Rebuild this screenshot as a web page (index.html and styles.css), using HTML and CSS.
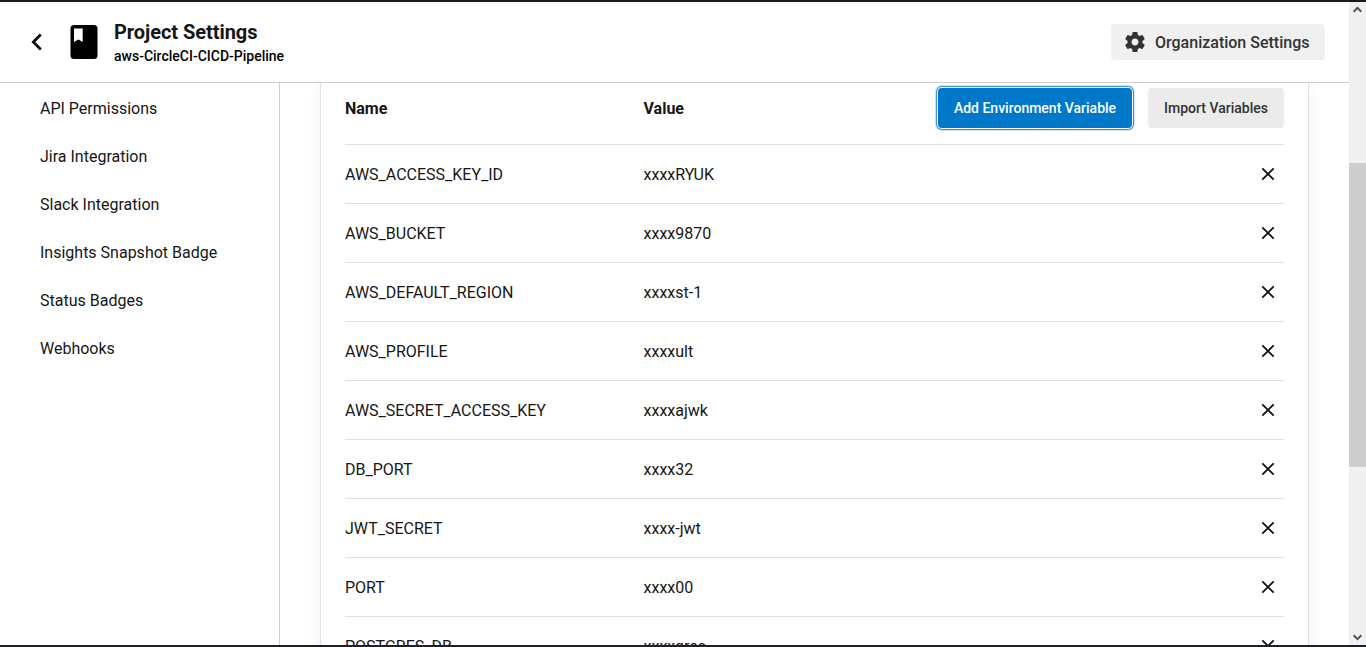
FILE: index.html
```html
<!DOCTYPE html>
<html lang="en">
<head>
<meta charset="utf-8">
<title>Project Settings</title>
<link rel="stylesheet" href="styles.css">
</head>
<body>
<svg width="0" height="0" class="sprite" aria-hidden="true">
  <symbol id="close" viewBox="0 0 14 14"><path d="M1.300 1.300 12.700 12.700M12.700 1.300 1.300 12.700" fill="none" stroke="#111" stroke-width="1.800"/></symbol>
</svg>
<div class="window">
  <div class="app">
    <header class="header">
      <svg class="back" width="12" height="18" viewBox="0 0 12 18"><path d="M10.800 1.500 3.300 9l7.500 7.500" fill="none" stroke="#0a0a0a" stroke-width="2.700"/></svg>
      <svg class="book" width="28" height="34" viewBox="0 0 28 34"><path fill="#000" fill-rule="evenodd" d="M3.500 0h20.500a3.500 3.500 0 0 1 3.500 3.500v27a3.500 3.500 0 0 1-3.500 3.500H4a3.500 3.500 0 0 1-3.500-3.500V3.500A3.500 3.500 0 0 1 4 0zM4 3.500V17l4.300-2.600 4.400 2.600V3.500z"/></svg>
      <div class="titles">
        <h1 class="title">Project Settings</h1>
        <div class="project">aws-CircleCI-CICD-Pipeline</div>
      </div>
      <button class="org">
        <svg width="24" height="24" viewBox="0 0 24 24"><path fill="#333" d="M19.430 12.980c.040-.320.070-.640.070-.980s-.030-.660-.070-.980l2.110-1.650c.190-.150.240-.420.120-.640l-2-3.460c-.120-.220-.390-.300-.610-.220l-2.490 1c-.520-.400-1.080-.730-1.690-.980l-.380-2.650C14.460 2.180 14.250 2 14 2h-4c-.250 0-.460.180-.490.420l-.380 2.650c-.610.250-1.170.590-1.690.980l-2.490-1c-.230-.090-.490 0-.610.220l-2 3.460c-.130.220-.070.490.120.640l2.110 1.650c-.040.320-.070.650-.070.980s.030.660.070.980l-2.110 1.650c-.190.150-.240.420-.120.640l2 3.460c.120.220.390.300.610.220l2.490-1c.520.400 1.080.730 1.690.980l.380 2.650c.030.240.240.420.490.420h4c.250 0 .460-.180.490-.420l.380-2.650c.610-.250 1.170-.590 1.690-.980l2.490 1c.230.090.490 0 .610-.220l2-3.460c.120-.220.070-.490-.120-.640l-2.110-1.650zM12 15.500c-1.930 0-3.500-1.570-3.500-3.500s1.570-3.500 3.500-3.500 3.500 1.570 3.500 3.500-1.570 3.500-3.500 3.500z"/></svg>
        <span>Organization Settings</span>
      </button>
    </header>
    <div class="body">
      <nav class="sidebar">
        <a>API Permissions</a>
        <a>Jira Integration</a>
        <a>Slack Integration</a>
        <a>Insights Snapshot Badge</a>
        <a>Status Badges</a>
        <a>Webhooks</a>
      </nav>
      <main class="main">
        <section class="card">
          <div class="row head">
            <b>Name</b><b>Value</b>
            <div class="actions"><button class="btn primary">Add Environment Variable</button><button class="btn">Import Variables</button></div>
          </div>
          <div class="row"><span>AWS_ACCESS_KEY_ID</span><span>xxxxRYUK</span><svg class="x"><use href="#close"/></svg></div>
          <div class="row"><span>AWS_BUCKET</span><span>xxxx9870</span><svg class="x"><use href="#close"/></svg></div>
          <div class="row"><span>AWS_DEFAULT_REGION</span><span>xxxxst-1</span><svg class="x"><use href="#close"/></svg></div>
          <div class="row"><span>AWS_PROFILE</span><span>xxxxult</span><svg class="x"><use href="#close"/></svg></div>
          <div class="row"><span>AWS_SECRET_ACCESS_KEY</span><span>xxxxajwk</span><svg class="x"><use href="#close"/></svg></div>
          <div class="row"><span>DB_PORT</span><span>xxxx32</span><svg class="x"><use href="#close"/></svg></div>
          <div class="row"><span>JWT_SECRET</span><span>xxxx-jwt</span><svg class="x"><use href="#close"/></svg></div>
          <div class="row"><span>PORT</span><span>xxxx00</span><svg class="x"><use href="#close"/></svg></div>
          <div class="row"><span>POSTGRES_DB</span><span>xxxxgres</span><svg class="x"><use href="#close"/></svg></div>
        </section>
      </main>
    </div>
  </div>
  <div class="scrollbar">
    <svg width="17" height="17" viewBox="0 0 17 17"><path d="m4.700 9.700 3.800-3.800 3.800 3.800" fill="none" stroke="#505050" stroke-width="2"/></svg>
    <div class="thumb"></div>
    <svg class="down" width="17" height="17" viewBox="0 0 17 17"><path d="m4.700 7.300 3.800 3.800 3.800-3.800" fill="none" stroke="#505050" stroke-width="2"/></svg>
  </div>
</div>
</body>
</html>
```
FILE: styles.css
```css
* { box-sizing: border-box; }
body { margin: 0; font: 16px/24px Roboto, "Liberation Sans", sans-serif; color: #161616; background: #fff; overflow: hidden; }
.sprite { display: none; }
.window { height: 647px; display: flex; border-top: 2px solid #1b1a1d; border-bottom: 2px solid #231b27; overflow: hidden; }
.app { flex: 1; display: flex; flex-direction: column; min-width: 0; }
.header { flex: none; height: 81px; display: flex; align-items: center; border-bottom: 1px solid #ccc; padding: 0 24px 0 30px; }
.back { margin-right: 28px; }
.book { margin-right: 16px; }
.titles { flex: 1; padding-top: 4px; }
.title { margin: 0; font-size: 20px; line-height: 24px; font-weight: 700; letter-spacing: -0.05px; }
.project { font-size: 14px; line-height: 24px; font-weight: 500; color: #000; }
button { font-family: inherit; border: 0; border-radius: 4px; color: #333; font-weight: 500; margin: 0; }
.org { display: flex; align-items: center; width: 214px; height: 36px; padding: 0 0 0 12px; gap: 8px; font-size: 16px; background: #f0f0f0; white-space: nowrap; }
.body { flex: 1; display: flex; min-height: 0; }
.sidebar { width: 280px; border-right: 1px solid #ccc; padding: 2px 0 0 40px; display: flex; flex-direction: column; }
.sidebar a { height: 48px; line-height: 48px; }
.main { flex: 1; padding: 0 40px; overflow: hidden; }
.card { width: 989px; height: 640px; border: 1px solid #e2e2e2; border-top: 0; padding: 0 24px; box-shadow: 0 0 14px rgba(0, 0, 0, .06); }
.row { display: grid; grid-template-columns: 298.500px 1fr auto; align-items: center; height: 59px; border-bottom: 1px solid #e0e0e0; }
.row > span, .row > b { padding-top: 2px; }
.head { height: 62px; padding-bottom: 11px; }
.head b { font-weight: 700; }
.actions { display: flex; gap: 16px; }
.btn { width: 136px; height: 40px; padding: 0; font-size: 14px; background: #ebebeb; }
.primary { width: 194px; color: #fff; background: #0078ca; box-shadow: 0 0 0 1px #fff, 0 0 0 2px #3e92d2, 0 0 0 3px #c9e4f8; }
.x { width: 14px; height: 14px; margin-right: 9px; }
.scrollbar { width: 17px; background: #f0f0f0; display: flex; flex-direction: column; }
.thumb { margin-top: 144px; height: 304px; background: #cdcdcd; }
.down { margin-top: auto; }
```
